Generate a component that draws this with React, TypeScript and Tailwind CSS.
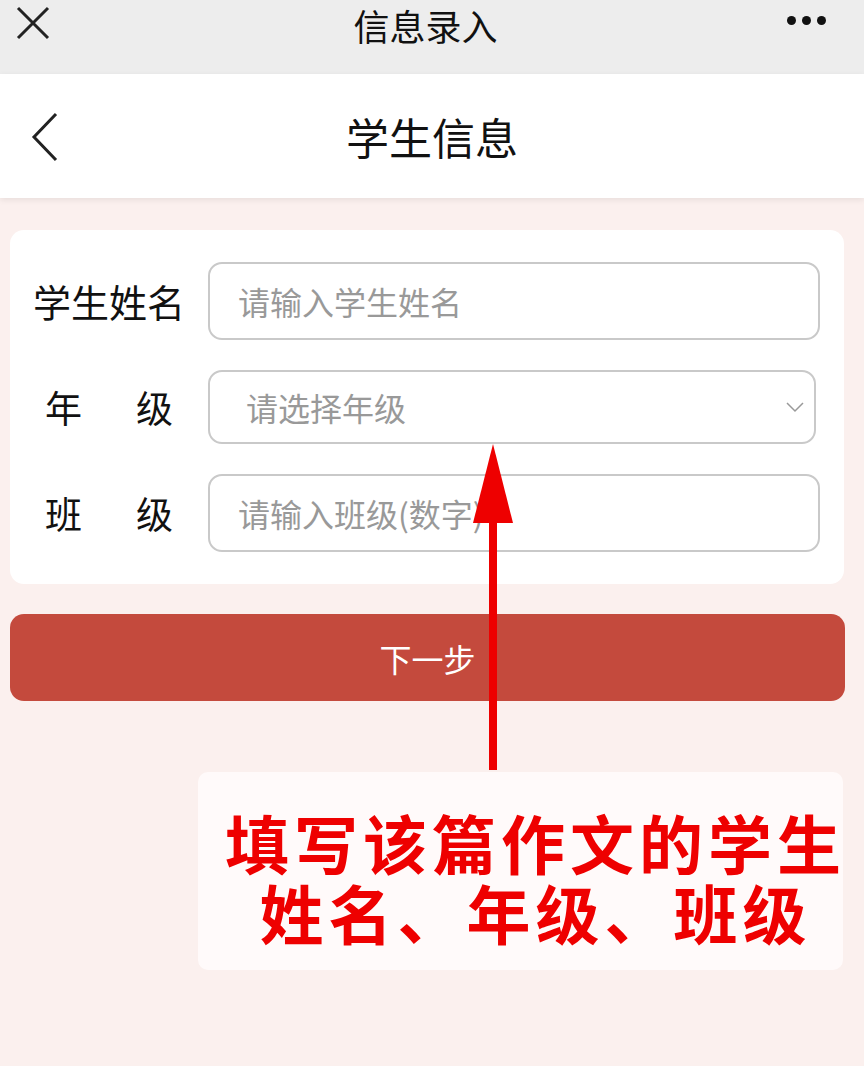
import React from 'react';

const font = { fontFamily: '"Noto Sans CJK SC", "Noto Sans", sans-serif' };

const Label: React.FC<{ a: string; b?: string }> = ({ a, b }) => (
  <div className="w-[198px] shrink-0 pl-[23px] text-[37px] leading-none text-[#111]">
    {b ? (
      <div className="flex w-[140px] justify-between pl-[12px]">
        <span>{a}</span>
        <span>{b}</span>
      </div>
    ) : (
      <span className="text-[38px]">{a}</span>
    )}
  </div>
);

export default function App() {
  return (
    <div className="relative min-h-[1066px] w-[864px] overflow-hidden bg-[#fbf0ee]" style={font}>
      {/* wechat top bar */}
      <div className="flex h-[74px] items-start justify-between bg-[#ededed] px-[16px]">
        <svg width="34" height="34" viewBox="0 0 34 34" className="mt-[6px]">
          <path d="M2 2 L32 32 M32 2 L2 32" stroke="#222" strokeWidth="3" />
        </svg>
        <div className="ml-[14px] text-[36px] leading-[50px] text-[#111]">信息录入</div>
        <div className="mr-[22px] mt-[16px] flex gap-[6px]">
          <span className="h-[9px] w-[9px] rounded-full bg-[#111]" />
          <span className="h-[9px] w-[9px] rounded-full bg-[#111]" />
          <span className="h-[9px] w-[9px] rounded-full bg-[#111]" />
        </div>
      </div>

      {/* page header */}
      <div className="relative flex h-[124px] items-center justify-center bg-white shadow-[0_2px_6px_rgba(0,0,0,0.08)]">
        <svg width="30" height="50" viewBox="0 0 30 50" className="absolute left-[30px] top-[38px]">
          <path d="M26 2 L4 25 L26 48" stroke="#222" strokeWidth="3" fill="none" />
        </svg>
        <div className="text-[43px] leading-none text-[#111]">学生信息</div>
      </div>

      {/* form card */}
      <div className="ml-[10px] mr-[20px] mt-[32px] flex h-[354px] flex-col gap-[30px] rounded-[14px] bg-white pt-[32px] pr-[24px]">
        <div className="flex items-center">
          <Label a="学生姓名" />
          <div className="flex h-[78px] flex-1 items-center rounded-[14px] border-2 border-[#c9c9c9] pl-[28px] text-[32px] text-[#999]">
            请输入学生姓名
          </div>
        </div>
        <div className="flex items-center">
          <Label a="年" b="级" />
          <div className="mr-[4px] flex h-[74px] flex-1 items-center justify-between rounded-[14px] border-2 border-[#c9c9c9] pl-[36px] pr-[10px] text-[32px] text-[#999]">
            <span>请选择年级</span>
            <svg width="18" height="12" viewBox="0 0 18 12">
              <path d="M1 2 L9 10 L17 2" stroke="#999" strokeWidth="1.5" fill="none" />
            </svg>
          </div>
        </div>
        <div className="flex items-center">
          <Label a="班" b="级" />
          <div className="flex h-[78px] flex-1 items-center rounded-[14px] border-2 border-[#c9c9c9] pl-[28px] text-[32px] text-[#999]">
            请输入班级(数字)
          </div>
        </div>
      </div>

      {/* next button */}
      <div className="ml-[10px] mr-[19px] mt-[30px] flex h-[87px] items-center justify-center rounded-[14px] bg-[#c44a3d] text-[32px] text-white">
        下一步
      </div>

      {/* annotation note */}
      <div className="ml-[198px] mr-[21px] mt-[71px] flex h-[198px] items-center justify-center rounded-[10px] bg-[#fffafa] pl-[30px] pt-[10px]">
        <p className="whitespace-nowrap text-center text-[64px] font-bold leading-[70px] tracking-[5px] text-[#ee0000]">
          填写该篇作文的学生
          <br />
          姓名、年级、班级
        </p>
      </div>

      {/* red arrow overlay */}
      <svg
        width="60"
        height="330"
        viewBox="0 0 60 330"
        className="absolute left-[463px] top-[442px]"
      >
        <path d="M30 2 L50 81 L10 81 Z" fill="#ee0000" />
        <rect x="26" y="80" width="8" height="248" fill="#ee0000" />
      </svg>
    </div>
  );
}
